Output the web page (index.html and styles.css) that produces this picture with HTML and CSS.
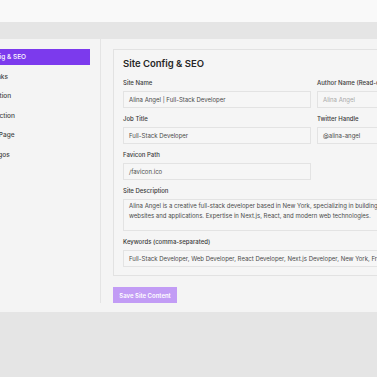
FILE: index.html
```html
<!DOCTYPE html>
<html lang="en">
  <head>
    <meta charset="UTF-8" />
    <meta name="viewport" content="width=device-width, initial-scale=1.0" />
    <title>Site Content</title>
    <link rel="stylesheet" href="styles.css">
  </head>
  <body>
    <div class="topbar"></div>
    <div class="band"></div>

    <div class="layout">
      <div class="sidebar">
        <div class="nav-item active">Site Config &amp; SEO</div>
        <div class="nav-item">Social Links</div>
        <div class="nav-item">Hero Section</div>
        <div class="nav-item">About Section</div>
        <div class="nav-item">Portfolio Page</div>
        <div class="nav-item">Client Logos</div>
      </div>

      <div class="content">
        <div class="card">
          <h2>Site Config &amp; SEO</h2>
          <div class="grid">
            <div class="field">
              <label>Site Name</label>
              <div class="input">Alina Angel | Full-Stack Developer</div>
            </div>
            <div class="field">
              <label>Author Name (Read-only)</label>
              <div class="input readonly">Alina Angel</div>
            </div>
            <div class="field">
              <label>Job Title</label>
              <div class="input">Full-Stack Developer</div>
            </div>
            <div class="field">
              <label>Twitter Handle</label>
              <div class="input">@alina-angel</div>
            </div>
            <div class="field">
              <label>Favicon Path</label>
              <div class="input">/favicon.ico</div>
            </div>
            <div class="field"></div>
            <div class="field wide">
              <label>Site Description</label>
              <div class="input textarea">Alina Angel is a creative full-stack developer based in New York, specializing in building websites and applications. Expertise in Next.js, React, and modern web technologies.</div>
            </div>
            <div class="field wide">
              <label>Keywords (comma-separated)</label>
              <div class="input">Full-Stack Developer, Web Developer, React Developer, Next.js Developer, New York, Freelance Developer</div>
            </div>
          </div>
        </div>
        <button class="save" disabled>Save Site Content</button>
      </div>
    </div>
  </body>
</html>
```

FILE: styles.css
```css
body {
  margin: 0;
  background-color: #e5e5e5;
  font-family: Inter, "Liberation Sans", sans-serif;
  overflow: hidden;
}
.topbar {
  height: 22px;
  background-color: #f9f9f9;
}
.band {
  height: 17px;
}
.layout {
  display: flex;
  margin-left: -47px;
  width: 560px;
  background-color: #f4f4f4;
  padding-bottom: 9px;
}
.sidebar {
  width: 127px;
  flex-shrink: 0;
  padding: 10px;
  border-right: 1px solid #e4e4e4;
}
.nav-item {
  height: 16px;
  line-height: 16px;
  margin-bottom: 3.5px;
  padding-left: 8px;
  font-size: 6.5px;
  font-weight: 500;
  color: #444;
  white-space: nowrap;
}
.nav-item.active {
  background-color: #7c3aed;
  color: #fff;
}
.content {
  flex: 1;
  padding: 10px 12px 0 12px;
}
.card {
  border: 1px solid #e2e2e2;
  background-color: #f5f5f5;
  padding: 7px 9px 8px 9px;
}
h2 {
  margin: 0 0 8px 0;
  font-size: 9.5px;
  line-height: 14px;
  font-weight: 600;
  color: #262626;
}
.grid {
  display: grid;
  grid-template-columns: 188px 84px;
  column-gap: 6px;
  row-gap: 7px;
}
.field.wide {
  grid-column: 1 / 3;
}
label {
  display: block;
  height: 8px;
  line-height: 8px;
  margin-bottom: 4px;
  font-size: 6px;
  font-weight: 500;
  color: #3a3a3a;
}
.input {
  height: 17px;
  line-height: 15px;
  box-sizing: border-box;
  border: 1px solid #e3e3e3;
  background-color: #f6f6f6;
  padding: 0 5px;
  font-size: 6px;
  color: #4a4a4a;
  white-space: nowrap;
  overflow: hidden;
}
.input.readonly {
  color: #a8a8a8;
}
.input.textarea {
  height: 32px;
  line-height: 10px;
  padding-top: 1px;
  white-space: normal;
}
.save {
  display: block;
  margin-top: 11px;
  width: 64px;
  height: 16px;
  padding: 0;
  border: none;
  background-color: #c29cf5;
  color: #fff;
  font-family: inherit;
  font-size: 6px;
  font-weight: 600;
}
```
